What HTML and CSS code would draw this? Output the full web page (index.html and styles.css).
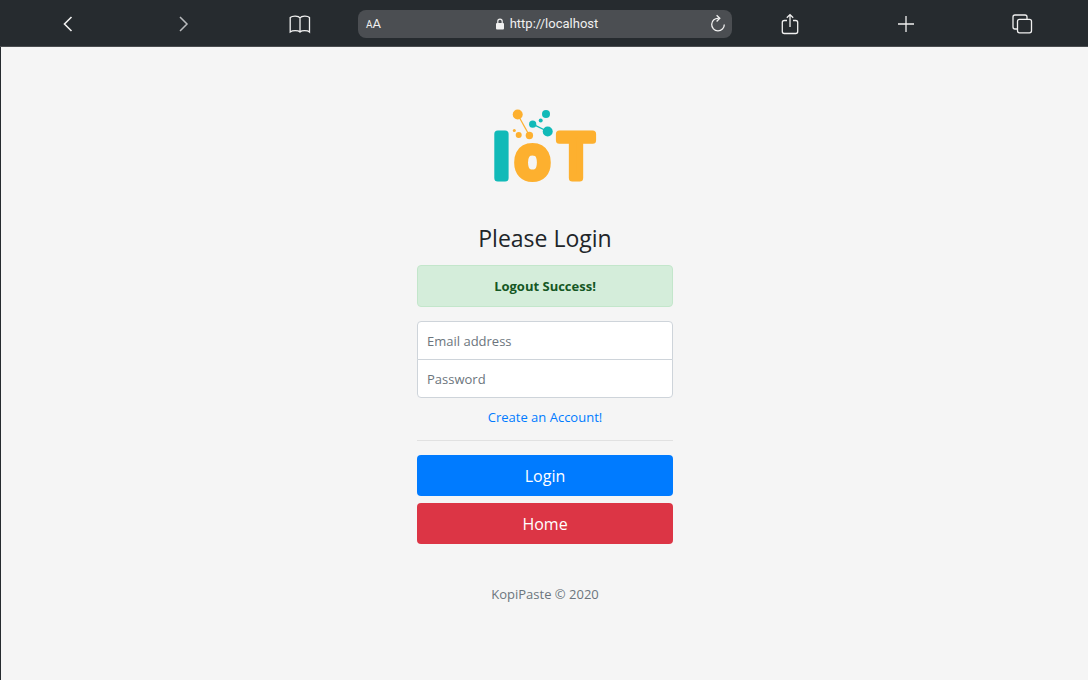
FILE: index.html
```html
<!DOCTYPE html>
<html lang="en">
<head>
<meta charset="utf-8">
<meta name="viewport" content="width=device-width, initial-scale=1">
<title>Login</title>
<link rel="stylesheet" href="styles.css">
</head>
<body>
<header class="toolbar">
  <button class="tool" type="button" aria-label="Back"><svg class="icon" viewBox="0 0 24 24"><path d="M15.5 5 8.500 12l7 7" stroke-width="1.600"/></svg></button>
  <button class="tool tool-dim" type="button" aria-label="Forward"><svg class="icon" viewBox="0 0 24 24"><path d="M8 5l7 7-7 7" stroke-width="1.500"/></svg></button>
  <button class="tool" type="button" aria-label="Bookmarks"><svg class="icon" viewBox="0 0 24 24"><path d="M12 5.800C10.500 3.600 4.500 3.400 2.200 5.500V20c2.300-1.700 8-1.700 9.800 0 1.800-1.700 7.500-1.700 9.500 0V5.500C19.500 3.400 13.500 3.600 12 5.800zV20"/></svg></button>
  <div class="address">
    <button class="text-size" type="button" aria-label="Text size"><span class="small-a">A</span>A</button>
    <div class="url">
      <svg class="lock" viewBox="0 0 10 12"><rect x="1" y="5" width="8" height="6.500" rx="1" fill="currentColor"/><path d="M2.800 5.500V3.300a2.200 2.200 0 0 1 4.400 0v2.200" fill="none" stroke="currentColor" stroke-width="1.200"/></svg>
      <span>http://localhost</span>
    </div>
    <button class="reload" type="button" aria-label="Reload"><svg class="reload-icon" viewBox="0 0 18 20"><path d="M9.500 4.300A6.300 6.300 0 1 0 15.300 10.500M7.600 1.300l3.200 3-3.200 3.200"/></svg></button>
  </div>
  <button class="tool" type="button" aria-label="Share"><svg class="icon" viewBox="0 0 24 24"><path d="M9 8.500H6.300a2 2 0 0 0-2 2V19.500a2 2 0 0 0 2 2h11.400a2 2 0 0 0 2-2v-9a2 2 0 0 0-2-2H15M12 15V2.600M8.800 5.800 12 2.600l3.200 3.200"/></svg></button>
  <button class="tool" type="button" aria-label="New tab"><svg class="icon" viewBox="0 0 24 24"><path d="M4 12h16M12 4v16"/></svg></button>
  <button class="tool" type="button" aria-label="Tabs"><svg class="icon" viewBox="0 0 24 24"><path d="M7 17H5a2 2 0 0 1-2-2V5a2 2 0 0 1 2-2h10a2 2 0 0 1 2 2v2"/><rect x="7.500" y="7.300" width="14" height="13.500" rx="2"/></svg></button>
</header>
<main class="page">
  <form class="login">
    <svg class="logo" viewBox="0 0 104 76" role="img" aria-label="IoT">
      <g class="teal"><circle cx="53" cy="6" r="4"/><circle cx="47.700" cy="12.500" r="2"/><circle cx="39.700" cy="16.200" r="3.600"/><circle cx="54.700" cy="23.500" r="5"/><path d="M39.700 16.200 54.700 23.500" stroke-width="1.300"/></g>
      <g class="orange"><circle cx="24.700" cy="6.500" r="5"/><circle cx="21.300" cy="22.500" r="1.500"/><circle cx="25.700" cy="27" r="3"/><circle cx="36.400" cy="27.500" r="3.700"/><path d="M24.700 6.500 36.400 27.500" stroke-width="1.300"/></g>
      <text class="letter teal" x="8.500" y="70">I</text>
      <text class="letter letter-small orange" x="39.500" y="70">o</text>
      <text class="letter orange" x="83" y="70">T</text>
    </svg>
    <h1 class="title">Please Login</h1>
    <div class="alert" role="status">Logout Success!</div>
    <div class="fields">
      <input class="field" type="email" placeholder="Email address" aria-label="Email address">
      <input class="field" type="password" placeholder="Password" aria-label="Password">
    </div>
    <a class="register" href="#">Create an Account!</a>
    <hr class="rule">
    <div class="actions">
      <button class="btn btn-primary" type="submit">Login</button>
      <button class="btn btn-danger" type="button">Home</button>
    </div>
    <p class="copyright">KopiPaste © 2020</p>
  </form>
</main>
</body>
</html>
```
FILE: styles.css
```css
* { box-sizing: border-box; }

body {
  margin: 0;
  min-height: 100vh;
  display: flex;
  flex-direction: column;
  background: #f5f5f5;
  color: #212529;
  font: 13px/20px "Open Sans", "Noto Sans", sans-serif;
}

button { font: inherit; cursor: pointer; }

.toolbar {
  display: grid;
  grid-template-columns: 116fr 116fr 116fr 374fr 116fr 116fr 116fr;
  align-items: center;
  height: 47px;
  padding: 2px 8px 0 10px;
  background: #262b2f;
  border-bottom: 1px solid #4a4d50;
  color: #f0f0f0;
}

.tool, .reload, .text-size {
  padding: 0;
  border: 0;
  background: none;
  color: inherit;
}

.tool { display: flex; justify-content: center; }
.tool-dim { color: #b9bbbd; }

.icon, .reload-icon {
  width: 24px;
  height: 24px;
  fill: none;
  stroke: currentColor;
  stroke-width: 1.3;
}

.reload-icon { display: block; width: 18px; height: 20px; }

.address {
  display: grid;
  grid-template-columns: 1fr auto 1fr;
  align-items: center;
  height: 28px;
  padding: 0 5px 0 8px;
  border-radius: 8px;
  background: #4b4e52;
}

.text-size {
  justify-self: start;
  font: 13px/22px Roboto, sans-serif;
}

.small-a { font-size: 10px; }

.url {
  display: flex;
  align-items: center;
  gap: 5px;
  font: 13px/20px Roboto, sans-serif;
}

.lock { width: 10px; height: 12px; }
.reload { justify-self: end; }

.page {
  flex: 1;
  display: flex;
  justify-content: center;
  align-items: flex-start;
  padding: 61px 0 60px 1px;
  border-left: 1px solid #262b2f;
}

.login {
  display: flex;
  flex-direction: column;
  width: 100%;
  max-width: 256px;
  text-align: center;
}

.logo { align-self: center; width: 104px; height: 76px; overflow: visible; }

.teal { fill: #11bab8; stroke: #11bab8; }
.orange { fill: #fdb02f; stroke: #fdb02f; }
.logo circle { stroke: none; }

.letter {
  font: 600 62px "Open Sans", sans-serif;
  text-anchor: middle;
  stroke-width: 7px;
  stroke-linejoin: round;
}

.letter-small { font-size: 58px; }

.title {
  margin: 38px 0 11px;
  font-size: 23px;
  font-weight: 400;
  line-height: 32px;
}

.alert {
  padding: 10px;
  border: 1px solid #c3e6cb;
  border-radius: 4px;
  background: #d4edda;
  color: #155724;
  font-weight: 700;
}

.fields { display: flex; flex-direction: column; margin: 14px 0 9px; }

.field {
  width: 100%;
  height: 39px;
  padding: 0 9px;
  border: 1px solid #ced4da;
  background: #fff;
  color: #495057;
  font: inherit;
}

.field:first-child { border-radius: 4px 4px 0 0; }
.field:last-child { margin-top: -1px; border-radius: 0 0 4px 4px; }
.field::placeholder { color: #6c757d; opacity: 1; }

.register { align-self: center; color: #007bff; text-decoration: none; }

.rule {
  width: 100%;
  margin: 13px 0 14px;
  border: 0;
  border-top: 1px solid #e1e1e1;
}

.actions { display: flex; flex-direction: column; gap: 7px; }

.btn {
  height: 41px;
  border: 0;
  border-radius: 4px;
  color: #fff;
  font-size: 16px;
}

.btn-primary { background: #007bff; }
.btn-danger { background: #dc3545; }

.copyright { margin: 40px 0 0; color: #6c757d; }
```
